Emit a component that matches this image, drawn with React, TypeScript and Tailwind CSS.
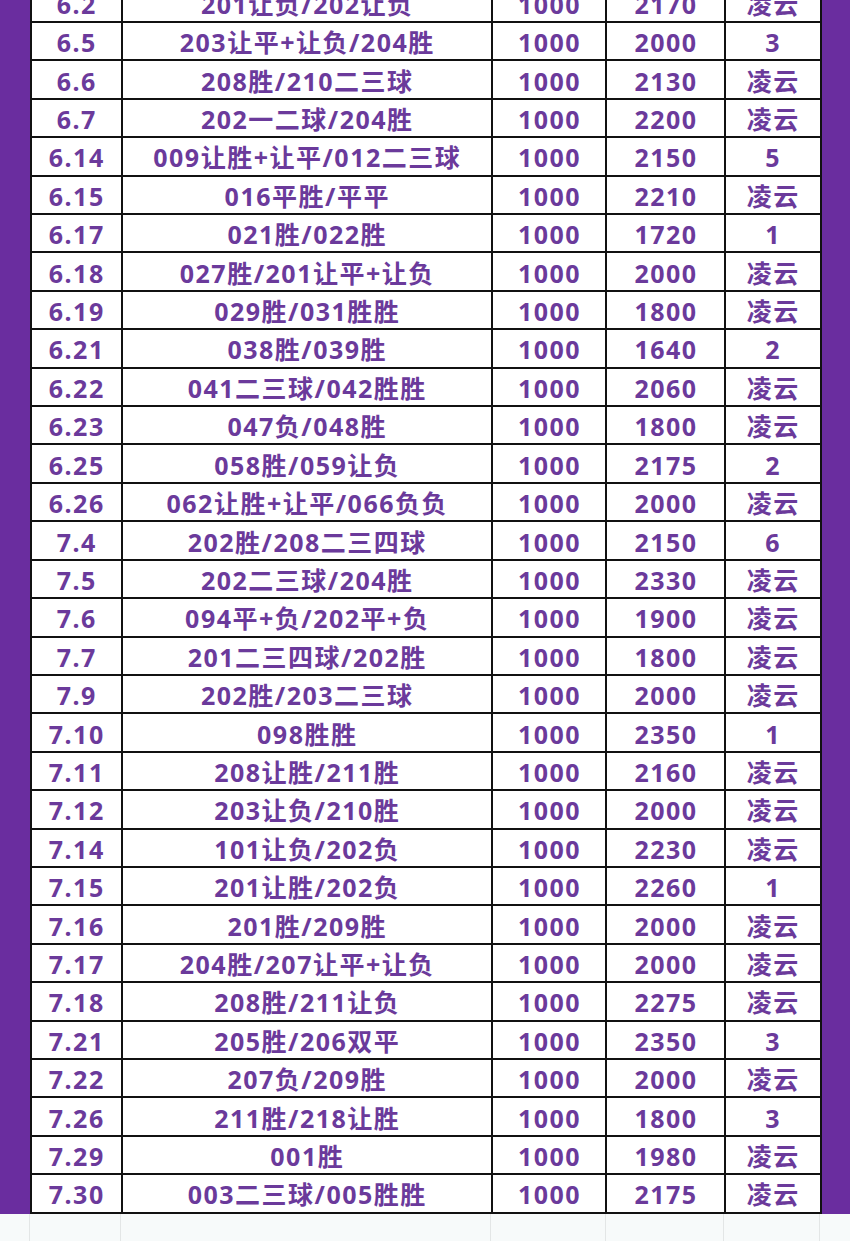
import React from "react";

const rows: [string, string, string, string, string][] = [
  ["6.2", "201让负/202让负", "1000", "2170", "凌云"],
  ["6.5", "203让平+让负/204胜", "1000", "2000", "3"],
  ["6.6", "208胜/210二三球", "1000", "2130", "凌云"],
  ["6.7", "202一二球/204胜", "1000", "2200", "凌云"],
  ["6.14", "009让胜+让平/012二三球", "1000", "2150", "5"],
  ["6.15", "016平胜/平平", "1000", "2210", "凌云"],
  ["6.17", "021胜/022胜", "1000", "1720", "1"],
  ["6.18", "027胜/201让平+让负", "1000", "2000", "凌云"],
  ["6.19", "029胜/031胜胜", "1000", "1800", "凌云"],
  ["6.21", "038胜/039胜", "1000", "1640", "2"],
  ["6.22", "041二三球/042胜胜", "1000", "2060", "凌云"],
  ["6.23", "047负/048胜", "1000", "1800", "凌云"],
  ["6.25", "058胜/059让负", "1000", "2175", "2"],
  ["6.26", "062让胜+让平/066负负", "1000", "2000", "凌云"],
  ["7.4", "202胜/208二三四球", "1000", "2150", "6"],
  ["7.5", "202二三球/204胜", "1000", "2330", "凌云"],
  ["7.6", "094平+负/202平+负", "1000", "1900", "凌云"],
  ["7.7", "201二三四球/202胜", "1000", "1800", "凌云"],
  ["7.9", "202胜/203二三球", "1000", "2000", "凌云"],
  ["7.10", "098胜胜", "1000", "2350", "1"],
  ["7.11", "208让胜/211胜", "1000", "2160", "凌云"],
  ["7.12", "203让负/210胜", "1000", "2000", "凌云"],
  ["7.14", "101让负/202负", "1000", "2230", "凌云"],
  ["7.15", "201让胜/202负", "1000", "2260", "1"],
  ["7.16", "201胜/209胜", "1000", "2000", "凌云"],
  ["7.17", "204胜/207让平+让负", "1000", "2000", "凌云"],
  ["7.18", "208胜/211让负", "1000", "2275", "凌云"],
  ["7.21", "205胜/206双平", "1000", "2350", "3"],
  ["7.22", "207负/209胜", "1000", "2000", "凌云"],
  ["7.26", "211胜/218让胜", "1000", "1800", "3"],
  ["7.29", "001胜", "1000", "1980", "凌云"],
  ["7.30", "003二三球/005胜胜", "1000", "2175", "凌云"],
];

export default function App() {
  return (
    <div
      className="w-[850px] h-[1241px] overflow-hidden bg-[#f7fafa]"
      style={{ fontFamily: '"Noto Sans", "Noto Sans CJK SC", sans-serif' }}
    >
      <div className="flex mt-[-17.4px]">
        <div className="w-[29.5px] bg-[#6a2d9f]" />
        <div className="grid grid-cols-[89px_368px_112.5px_116.5px_94px] auto-rows-[36.42px] gap-[2px] p-[2px] bg-[#111111] w-[792px]">
          {rows.map((r, i) => (
            <React.Fragment key={i}>
              {r.map((c, j) => (
                <div
                  key={j}
                  className="bg-white flex items-center justify-center text-[25px] leading-none font-bold text-[#6b3a9b] tracking-[1.5px] pl-[1.5px] pt-[3px] whitespace-nowrap"
                >
                  {c}
                </div>
              ))}
            </React.Fragment>
          ))}
        </div>
        <div className="flex-1 bg-[#6a2d9f]" />
      </div>
      <div className="flex h-[40px]">
        <div className="w-[30px] border-r border-[#e3e6e6]" />
        <div className="w-[91px] border-r border-[#e3e6e6]" />
        <div className="w-[370px] border-r border-[#e3e6e6]" />
        <div className="w-[114.5px] border-r border-[#e3e6e6]" />
        <div className="w-[118.5px] border-r border-[#e3e6e6]" />
        <div className="w-[96px] border-r border-[#e3e6e6]" />
      </div>
    </div>
  );
}
